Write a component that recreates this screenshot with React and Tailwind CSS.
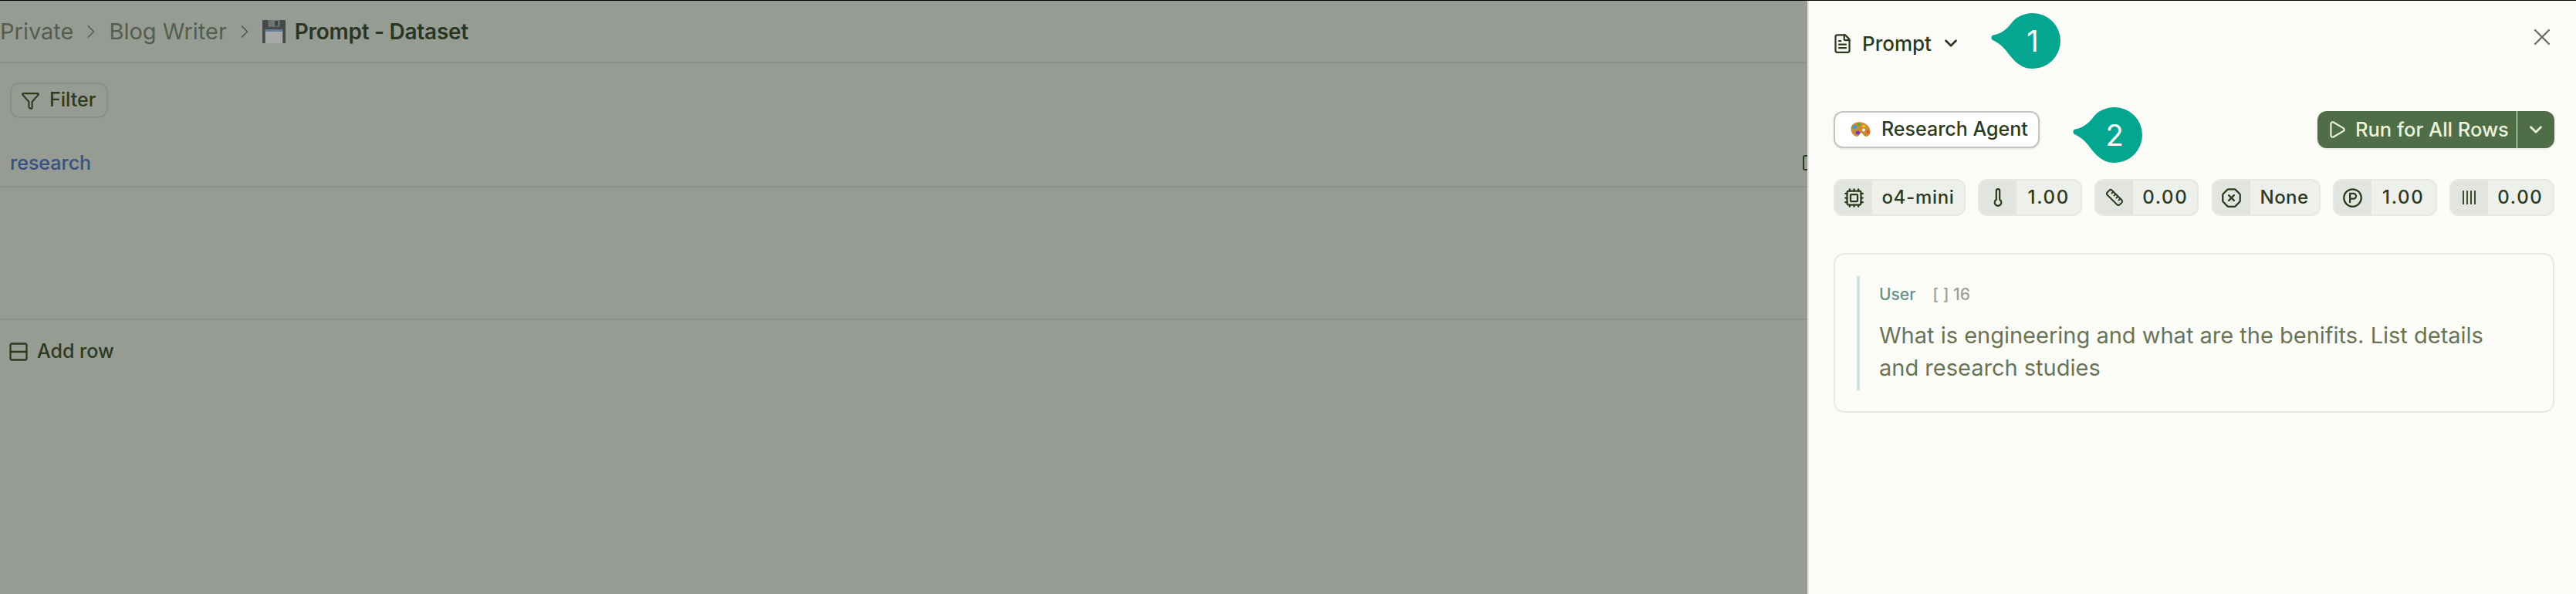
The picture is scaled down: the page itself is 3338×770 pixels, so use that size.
import { ChevronDown, ChevronRight, Cpu, FileText, Funnel, OctagonX, Play, Rows2, Ruler, Thermometer, X, CircleParking } from 'lucide-react'

function Floppy() {
  return (
    <svg viewBox="0 0 24 24" className="w-[30px] h-[30px] shrink-0">
      <rect x="0" y="0" width="24" height="24" rx="1" fill="#46494a" />
      <rect x="6" y="0" width="12" height="7" fill="#6f7372" />
      <rect x="13" y="1" width="3" height="5" fill="#3a3d3e" />
      <rect x="3" y="10" width="18" height="14" fill="#a7aaa6" />
      <rect x="3" y="10" width="18" height="2" fill="#5f7f9f" />
    </svg>
  )
}

function Palette() {
  return (
    <svg viewBox="0 0 26 20" className="w-[26px] h-[20px] shrink-0">
      <path d="M.5 8C1.500 2 8-.5 14 .5c6 1 11.500 5.500 11.500 12 0 4.500-3.500 7.500-7 6-3-1.300-2.500-5-5.500-4-2 .7-1 4.500-4.500 4.500C4 19 0 14 .5 8z" fill="#c98e35" />
      <ellipse cx="5.500" cy="6.500" rx="3" ry="2.200" fill="#2f9fe8" />
      <ellipse cx="11" cy="3.500" rx="2.200" ry="1.700" fill="#4fae35" />
      <ellipse cx="17" cy="5.500" rx="2.200" ry="1.800" fill="#f2c511" />
      <ellipse cx="9.500" cy="14" rx="3" ry="2.300" fill="#7d35c8" />
      <ellipse cx="22.500" cy="13" rx="2" ry="2.400" fill="#e8503a" />
      <circle cx="17" cy="10.500" r="1.900" fill="#f7f2e6" />
    </svg>
  )
}

function Bars() {
  return (
    <svg viewBox="0 0 20 20" className="w-[20px] h-[20px]" stroke="currentColor" strokeWidth="1.800" fill="none">
      <path d="M2 1v18M7 1v18M12 1v18M17 1v18" />
    </svg>
  )
}

// teardrop callout, tail points left
function Callout({ n, className }) {
  return (
    <div className={`absolute w-[90px] h-[72px] ${className}`}>
      <svg viewBox="0 0 90 72" className="w-[90px] h-[72px]">
        <path d="M54 0A36 36 0 1 1 54 72C36 72 27 58 19 48C13 41 7 37 2 35C-.5 33 0 29 3 28.500C12 27 20 22 28 11C34 4 44 0 54 0Z" fill="#04a68f" />
      </svg>
      <span className="absolute left-[18px] top-0 w-[72px] h-[72px] flex items-center justify-center text-[38px] text-white">{n}</span>
    </div>
  )
}

function Chip({ icon, value, width, tracking }) {
  return (
    <div className={`flex h-[48px] items-stretch rounded-[12px] border-2 border-[#e6e8e2] bg-[#eef0ec] overflow-hidden ${width}`}>
      <div className="w-[48px] shrink-0 bg-[#e2e5df] flex items-center justify-center">{icon}</div>
      <div className={`flex-1 flex items-center justify-center text-[24px] font-medium ${tracking}`}>{value}</div>
    </div>
  )
}

export default function App() {
  return (
    <div className="w-[3338px] h-[770px] flex flex-col overflow-hidden bg-[#fbfcf7] text-[#2c3a1e] font-['Inter','Liberation_Sans',sans-serif]">
      <div className="h-px bg-black shrink-0" />
      <div className="flex flex-1 min-h-0">
        {/* dimmed table */}
        <div className="w-[2342px] shrink-0 bg-[#969b94] overflow-hidden">
          <div className="h-[81px] flex items-center border-b-2 border-[#8c918a] text-[29px] text-[#545e4d]">
            <span>Private</span>
            <ChevronRight className="w-[28px] h-[28px] mx-[9px]" strokeWidth={1.5} />
            <span>Blog Writer</span>
            <ChevronRight className="w-[28px] h-[28px] mx-[9px]" strokeWidth={1.5} />
            <Floppy />
            <span className="ml-[12px] font-semibold text-[#293722] text-[28px] -tracking-[0.01em]">Prompt - Dataset</span>
          </div>
          <div className="pl-[13px] pt-[25px]">
            <div className="w-[127px] h-[46px] flex items-center gap-[12px] pl-[12px] border-2 border-[#8a8f88] rounded-[12px] text-[25px] font-medium text-[#2c3a1e]">
              <Funnel className="w-[25px] h-[25px]" strokeWidth={2} />
              Filter
            </div>
          </div>
          <div className="mt-[8px] h-[82px] flex items-end justify-between pl-[13px] pb-[15px] border-b-2 border-[#8c918a]">
            <span className="text-[25px] leading-[30px] font-medium text-[#36507f]">research</span>
            <span className="w-[12px] h-[20px] -mr-[6px] mb-[5px] border-2 border-[#2c3a1e] rounded-[3px]" />
          </div>
          <div className="h-[172px] border-b-2 border-[#8c918a]" />
          <div className="h-[82px] flex items-center gap-[10px] pl-[10px] text-[25px] font-medium text-[#2c3a1e]">
            <Rows2 className="w-[28px] h-[28px]" strokeWidth={2} />
            Add row
          </div>
        </div>

        {/* prompt panel */}
        <div className="relative flex-1 border-l-2 border-[#e6e8e2] pl-[32px] pr-[28px]">
          <div className="h-[111px] pt-[32px] flex justify-between">
            <div className="flex items-center h-[46px] text-[26px] font-medium">
              <FileText className="w-[27px] h-[27px] -ml-[2px] mr-[12px]" strokeWidth={2} />
              <span>Prompt</span>
              <ChevronDown className="w-[26px] h-[26px] ml-[12px]" strokeWidth={2.5} />
            </div>
            <X className="w-[36px] h-[36px] -mt-[3px] -mr-[2px] text-[#6b7260]" strokeWidth={1.6} />
          </div>
          <Callout n="1" className="left-[236px] top-[16px]" />
          <Callout n="2" className="left-[342px] top-[138px]" />

          <div className="mt-[32px] h-[48px] flex justify-between">
            <div className="w-[267px] flex items-center gap-[14px] pl-[20px] border-2 border-[#c4c7c0] rounded-[12px] bg-white text-[25px] font-medium whitespace-nowrap shadow-sm">
              <Palette />
              Research Agent
            </div>
            <div className="w-[307px] flex rounded-[12px] bg-[#4f6e48] text-[#eef3d8] text-[25.500px] font-medium shadow-sm">
              <div className="flex-1 flex items-center gap-[11px] pl-[12px] whitespace-nowrap border-r border-[#f3f5ea]">
                <Play className="w-[26px] h-[26px]" strokeWidth={2} />
                Run for All Rows
              </div>
              <div className="w-[48px] flex items-center justify-center">
                <ChevronDown className="w-[26px] h-[26px]" strokeWidth={2.5} />
              </div>
            </div>
          </div>

          <div className="mt-[40px] flex justify-between">
            <Chip icon={<Cpu className="w-[27px] h-[27px]" strokeWidth={2} />} value="o4-mini" width="w-[171px]" tracking="tracking-[0.03em]" />
            <Chip icon={<Thermometer className="w-[26px] h-[26px]" strokeWidth={2} />} value="1.00" width="w-[135px]" tracking="tracking-[0.07em]" />
            <Chip icon={<Ruler className="w-[24px] h-[24px]" strokeWidth={2} />} value="0.00" width="w-[135px]" tracking="tracking-[0.07em]" />
            <Chip icon={<OctagonX className="w-[27px] h-[27px]" strokeWidth={2} />} value="None" width="w-[141px]" tracking="tracking-[0.02em]" />
            <Chip icon={<CircleParking className="w-[27px] h-[27px]" strokeWidth={2} />} value="1.00" width="w-[135px]" tracking="tracking-[0.07em]" />
            <Chip icon={<Bars />} value="0.00" width="w-[136px]" tracking="tracking-[0.07em]" />
          </div>

          <div className="mt-[48px] h-[207px] border-2 border-[#e6e9e3] rounded-[14px] pl-[28px] pt-[28px]">
            <div className="h-[148px] border-l-4 border-[#cbe2e1] pl-[25px]">
              <div className="flex items-center gap-[22px] h-[48px] text-[21px]">
                <span className="font-medium text-[#659088]">User</span>
                <span className="font-medium text-[#9ba196]">[ ] 16</span>
              </div>
              <p className="mt-[8px] w-[840px] text-[29px] leading-[42px] text-[#6b7355]">
                What is engineering and what are the benifits. List details and research studies
              </p>
            </div>
          </div>
        </div>
      </div>
    </div>
  )
}
